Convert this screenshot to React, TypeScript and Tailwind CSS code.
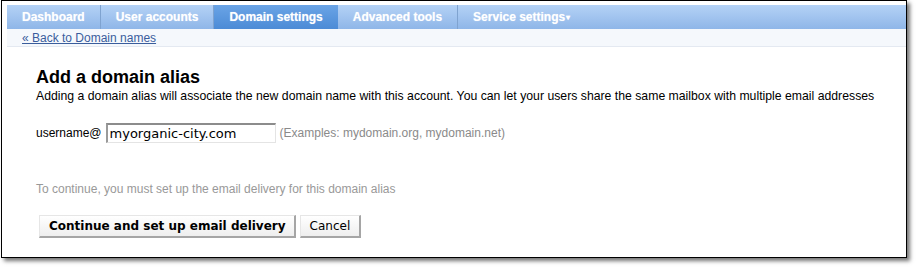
import React from "react";

const tabs = [
  { label: "Dashboard" },
  { label: "User accounts" },
  { label: "Domain settings", active: true },
  { label: "Advanced tools" },
  { label: "Service settings", menu: true },
];

export default function App() {
  return (
    <div className="w-[916px] h-[267px] bg-white overflow-hidden font-['Liberation_Sans',Arial,sans-serif]">
      <div className="ml-[1px] w-[906px] h-[258px] border border-black bg-white shadow-[3px_3px_4px_rgba(0,0,0,0.55)] pt-[4px] pl-[5px] flex flex-col">
        {/* tab bar */}
        <div className="h-[24px] flex bg-[linear-gradient(#b4d2f6,#8fb6e8)]">
          {tabs.map((t) => (
            <div
              key={t.label}
              className={`h-full flex items-center px-[15px] text-[12px] font-bold text-white [text-shadow:0_0_1px_rgba(255,255,255,0.6)] ${
                t.active
                  ? "bg-[linear-gradient(#6aa4e6,#4c8bd6)]"
                  : t.menu
                  ? ""
                  : "border-r border-[#7fa3d0]"
              }`}
            >
              {t.label}
              {t.menu && <span className="text-[8px] ml-[1px] mt-[2px]">▾</span>}
            </div>
          ))}
        </div>

        {/* sub bar */}
        <div className="h-[18px] bg-[#f5f8fc] border-b border-[#e4e9f1] flex items-center pl-[15px]">
          <a href="#" className="text-[12px] text-[#3a5d9c] underline leading-none">
            « Back to Domain names
          </a>
        </div>

        {/* content */}
        <div className="pl-[29px] pt-[20px] text-black">
          <h1 className="text-[18px] font-bold leading-[20px]">Add a domain alias</h1>
          <p className="text-[12.25px] leading-[16px] mt-[1px]">
            Adding a domain alias will associate the new domain name with this account. You can let your users share the same mailbox with multiple email addresses
          </p>

          <div className="flex items-center mt-[19px] h-[20px]">
            <span className="text-[12px]">username@</span>
            <input
              readOnly
              value="myorganic-city.com"
              className="ml-[4px] w-[170px] h-[20px] px-[2px] text-[13px] font-['DejaVu_Sans',sans-serif] text-black border-t-2 border-l-2 border-t-[#8c8c8c] border-l-[#9a9a9a] border-r border-b border-r-[#e4e4e4] border-b-[#e4e4e4] outline-none"
            />
            <span className="ml-[4px] text-[12px] text-[#8a8a8a]">(Examples: mydomain.org, mydomain.net)</span>
          </div>

          <p className="mt-[37px] text-[12px] text-[#999999]">
            To continue, you must set up the email delivery for this domain alias
          </p>

          <div className="flex gap-[4px] mt-[17px] font-['DejaVu_Sans',sans-serif]">
            <button className="h-[23px] pl-[9px] pr-[8px] ml-[3px] text-[12px] font-bold bg-[linear-gradient(#ffffff,#eeeeee)] border-t border-l border-[#e6e6e6] border-r-2 border-b-2 border-r-[#a5a5a5] border-b-[#a5a5a5]">
              Continue and set up email delivery
            </button>
            <button className="h-[23px] px-[9px] text-[12px] bg-[linear-gradient(#ffffff,#eeeeee)] border-t border-l border-[#e6e6e6] border-r-2 border-b-2 border-r-[#a5a5a5] border-b-[#a5a5a5]">
              Cancel
            </button>
          </div>
        </div>
      </div>
    </div>
  );
}
